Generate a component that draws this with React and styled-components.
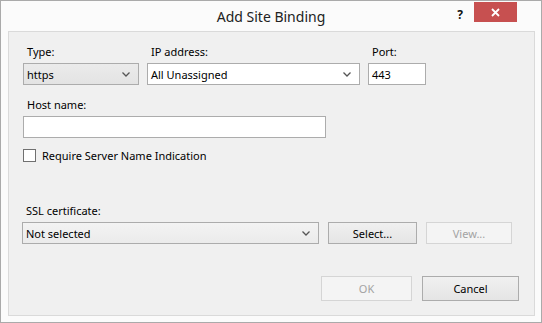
import React from 'react';
import styled, { createGlobalStyle } from 'styled-components';

const GlobalStyle = createGlobalStyle`
  html, body {
    margin: 0;
    padding: 0;
    background: #ffffff;
  }
  body {
    font-family: "Noto Sans", "Open Sans", sans-serif;
  }
`;

const Window = styled.div`
  box-sizing: border-box;
  width: 542px;
  height: 323px;
  border: 1px solid #aaaaaa;
  background: #fbfbfb;
  display: flex;
  flex-direction: column;
`;

const TitleBar = styled.div`
  height: 30px;
  position: relative;
  display: flex;
  align-items: center;
  justify-content: center;
`;

const Title = styled.div`
  font-size: 14px;
  color: #222;
  margin-top: 1px;
`;

const Controls = styled.div`
  position: absolute;
  top: 1px;
  right: 24px;
  display: flex;
  align-items: flex-start;
`;

const HelpButton = styled.div`
  width: 20px;
  height: 20px;
  font-size: 12px;
  font-weight: bold;
  color: #111;
  display: flex;
  align-items: center;
  justify-content: center;
  margin-right: 4px;
  margin-top: 2px;
`;

const CloseButton = styled.div`
  width: 43px;
  height: 20px;
  background: #c75050;
  display: flex;
  align-items: center;
  justify-content: center;
`;

const Panel = styled.div`
  flex: 1;
  margin: 0 6px 6px 7px;
  border: 1px solid #dadada;
  background: #f0f0f0;
  padding: 12px 15px 0 14px;
  display: flex;
  flex-direction: column;
  font-size: 11px;
  color: #000;
`;

const Row = styled.div`
  display: flex;
  align-items: flex-end;
  gap: ${(p) => p.gap || 8}px;
  margin-top: ${(p) => p.top || 0}px;
  margin-left: ${(p) => p.indent || 0}px;
  justify-content: ${(p) => (p.right ? 'flex-end' : 'flex-start')};
`;

const Field = styled.div`
  display: flex;
  flex-direction: column;
  width: ${(p) => p.w}px;
`;

const Label = styled.div`
  line-height: 15px;
  padding-left: 4px;
  margin-bottom: 4px;
  white-space: nowrap;
`;

const boxBackground = {
  list: 'linear-gradient(#ebebeb, #e3e3e3)',
  pale: 'linear-gradient(#f3f3f3, #ebebeb)',
  edit: '#ffffff',
};

const Box = styled.div`
  box-sizing: border-box;
  height: 22px;
  width: 100%;
  border: 1px solid ${(p) => (p.kind === 'edit' ? '#abadb3' : '#acacac')};
  background: ${(p) => boxBackground[p.kind || 'edit']};
  display: flex;
  align-items: center;
  padding: 0 8px 0 3px;
  white-space: nowrap;
`;

const BoxText = styled.span`
  flex: 1;
`;

const CheckRow = styled.label`
  display: flex;
  align-items: center;
  gap: 6px;
  margin-top: 10px;
`;

const CheckBox = styled.span`
  box-sizing: border-box;
  width: 13px;
  height: 13px;
  border: 1px solid #707070;
  background: #fff;
`;

const Button = styled.div`
  box-sizing: border-box;
  width: ${(p) => p.w}px;
  height: ${(p) => p.h || 22}px;
  border: 1px solid ${(p) => (p.disabled ? '#d5d5d5' : '#acacac')};
  background: ${(p) => (p.disabled ? '#f4f4f4' : 'linear-gradient(#f0f0f0, #e5e5e5)')};
  color: ${(p) => (p.disabled ? '#a3a3a3' : '#000')};
  display: flex;
  align-items: center;
  justify-content: center;
`;

const Chevron = () => (
  <svg width="8" height="5" viewBox="0 0 8 5">
    <polyline points="0.5,0.5 4,4 7.5,0.5" fill="none" stroke="#555" strokeWidth="1.3" />
  </svg>
);

const CloseIcon = () => (
  <svg width="9" height="9" viewBox="0 0 9 9">
    <path d="M1 1 L8 8 M8 1 L1 8" stroke="#fff" strokeWidth="1.8" />
  </svg>
);

export default function App() {
  return (
    <>
      <GlobalStyle />
      <Window>
        <TitleBar>
          <Title>Add Site Binding</Title>
          <Controls>
            <HelpButton>?</HelpButton>
            <CloseButton>
              <CloseIcon />
            </CloseButton>
          </Controls>
        </TitleBar>
        <Panel>
          <Row gap={8}>
            <Field w={116}>
              <Label>Type:</Label>
              <Box kind="list">
                <BoxText>https</BoxText>
                <Chevron />
              </Box>
            </Field>
            <Field w={213}>
              <Label>IP address:</Label>
              <Box>
                <BoxText>All Unassigned</BoxText>
                <Chevron />
              </Box>
            </Field>
            <Field w={58}>
              <Label>Port:</Label>
              <Box>
                <BoxText>443</BoxText>
              </Box>
            </Field>
          </Row>
          <Row top={12}>
            <Field w={303}>
              <Label>Host name:</Label>
              <Box />
            </Field>
          </Row>
          <CheckRow>
            <CheckBox />
            <span>Require Server Name Indication</span>
          </CheckRow>
          <Row top={40} gap={9} indent={-1}>
            <Field w={297}>
              <Label>SSL certificate:</Label>
              <Box kind="pale">
                <BoxText>Not selected</BoxText>
                <Chevron />
              </Box>
            </Field>
            <Button w={89}>Select...</Button>
            <Button w={86} disabled>View...</Button>
          </Row>
          <Row top={32} gap={10} right>
            <Button w={91} h={25} disabled>OK</Button>
            <Button w={97} h={25}>Cancel</Button>
          </Row>
        </Panel>
      </Window>
    </>
  );
}
